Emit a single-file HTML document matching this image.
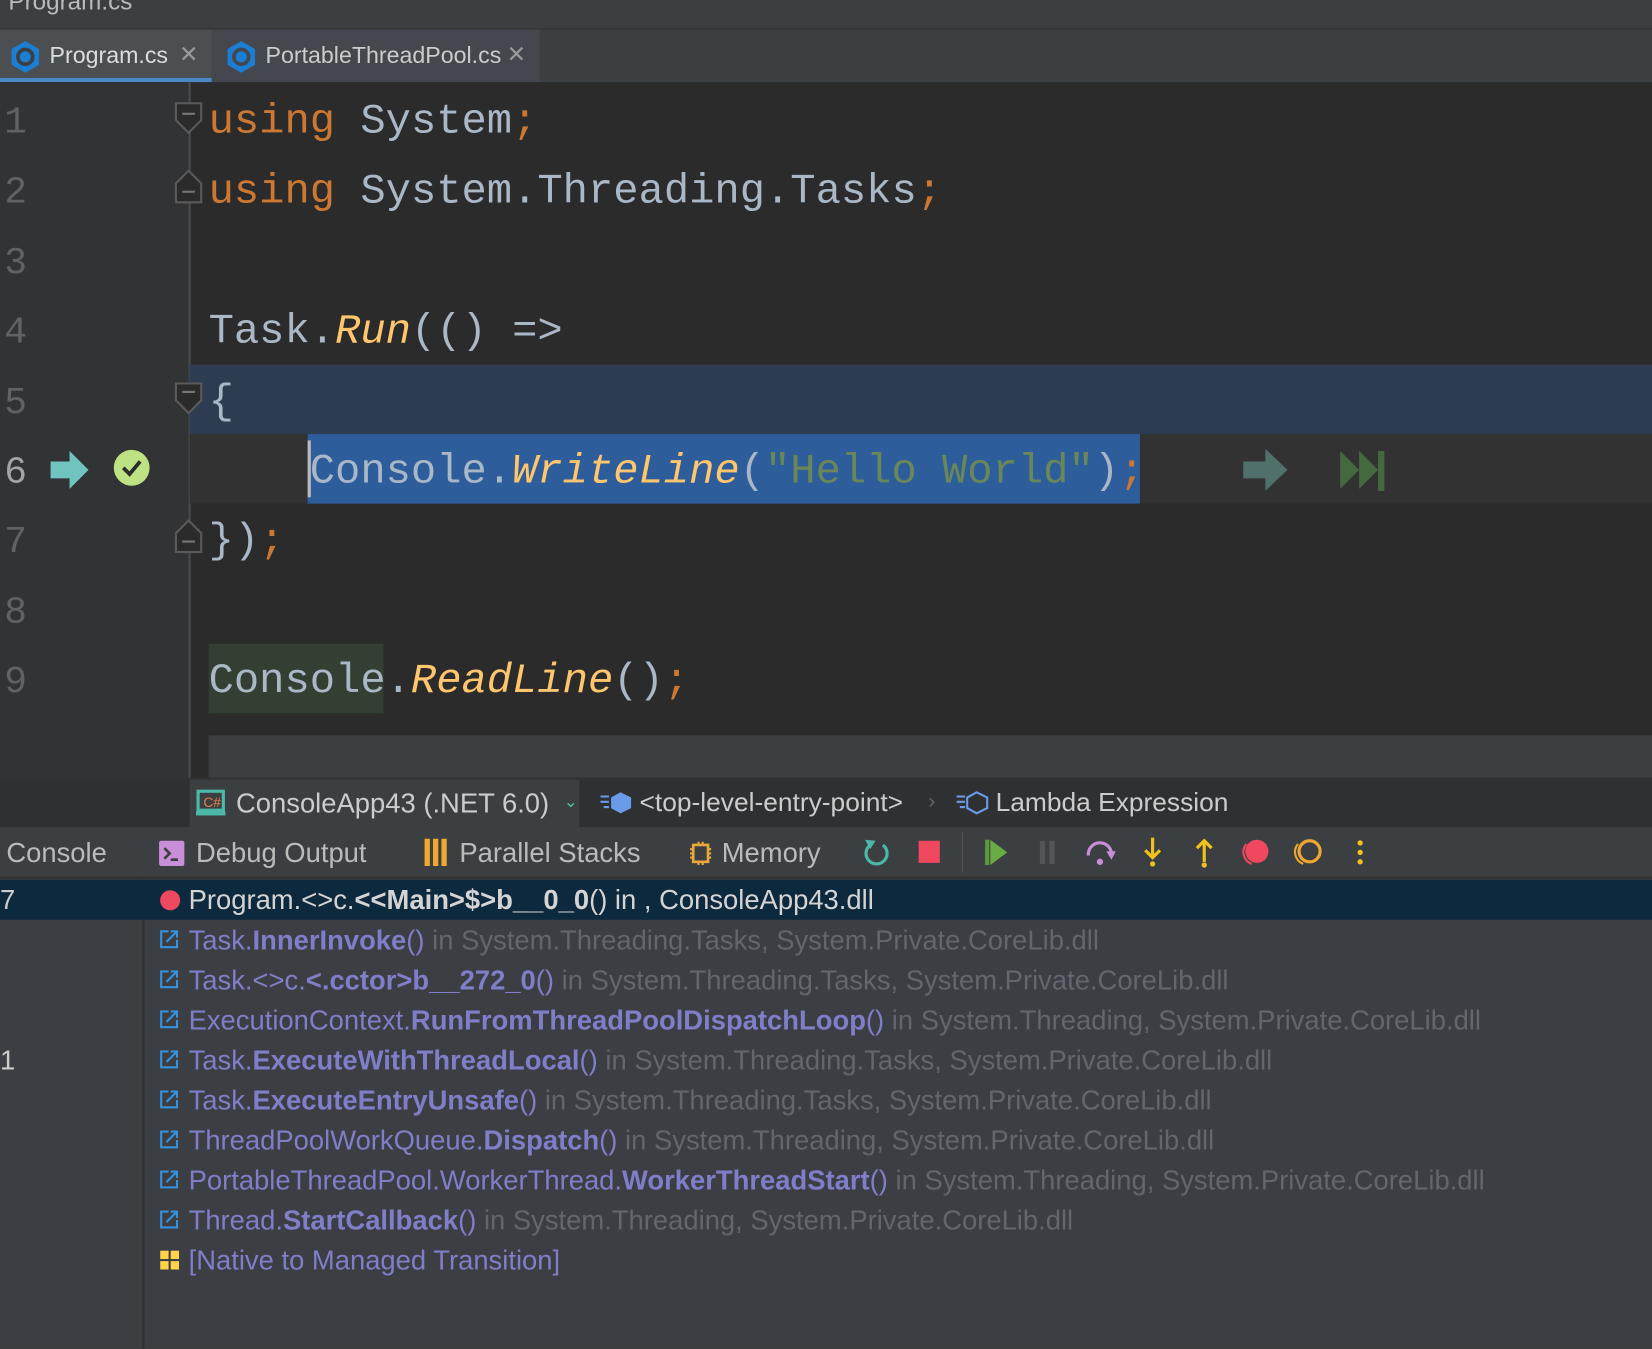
<!DOCTYPE html>
<html><head><meta charset="utf-8"><style>
*{margin:0;padding:0;box-sizing:border-box}
html,body{width:1652px;height:1348px;overflow:hidden;background:#3c3f41}
#w{position:absolute;left:0;top:0;width:1568px;height:1280px;transform:scale(1.05357);transform-origin:0 0;font-family:"Liberation Sans",sans-serif}
.a{position:absolute;white-space:pre}
.code{font-family:"Liberation Mono",monospace;font-size:40px;color:#a9b7c6;line-height:66px}
.kw{color:#cc7832}.fn{color:#ffc66d;font-style:italic}.str{color:#6a8759}
.ln{font-family:"Liberation Mono",monospace;font-size:36px;color:#606366;line-height:66px;left:4px}
.ui{font-size:26px;color:#bbbbbb;line-height:38px}
.m{color:#7f7fc9}.m b{font-weight:bold}.g{color:#64656f}
.ic{position:absolute;left:151px}
</style></head><body><div id="w">
<!-- title -->
<div class="a" style="left:0;top:0;width:1568px;height:28px;background:#3c3f41;border-bottom:1px solid #323232"></div>
<div class="a ui" style="left:8px;top:-18px;color:#bbb;font-size:23px">Program.cs</div>
<!-- tabs -->
<div class="a" style="left:0;top:28px;width:1568px;height:50px;background:#3c3f41"></div>
<div class="a" style="left:0;top:28px;width:201px;height:50px;background:#4b4f52;border-bottom:4px solid #4a88c7"></div>
<div class="a" style="left:201px;top:28px;width:311px;height:50px;background:#45474f"></div>
<svg class="a" style="left:9px;top:38px" width="30" height="32"><polygon points="15,1 28,8.5 28,23.5 15,31 2,23.5 2,8.5" fill="#1a7fd4"/><circle cx="15" cy="16" r="7" fill="none" stroke="#3c3f41" stroke-width="3.5"/></svg>
<div class="a ui" style="left:47px;top:34px;color:#ddd;font-size:22px">Program.cs</div>
<div class="a ui" style="left:170px;top:33px;color:#999;font-size:22px">✕</div>
<svg class="a" style="left:214px;top:38px" width="30" height="32"><polygon points="15,1 28,8.5 28,23.5 15,31 2,23.5 2,8.5" fill="#1a7fd4"/><circle cx="15" cy="16" r="7" fill="none" stroke="#45474f" stroke-width="3.5"/></svg>
<div class="a ui" style="left:252px;top:34px;color:#ccc;font-size:22px">PortableThreadPool.cs</div>
<div class="a ui" style="left:481px;top:33px;color:#999;font-size:22px">✕</div>
<!-- editor -->
<div class="a" style="left:0;top:78px;width:1568px;height:660px;background:#2b2b2b"></div>
<div class="a" style="left:0;top:78px;width:180px;height:660px;background:#313335"></div>
<div class="a" style="left:179px;top:78px;width:2px;height:660px;background:#4a4a4a"></div>
<div class="a" style="left:180px;top:346px;width:1388px;height:66px;background:#2e3c52"></div>
<div class="a" style="left:180px;top:412px;width:1388px;height:66px;background:#323232"></div>
<div class="a" style="left:292px;top:412px;width:790px;height:66px;background:#2d5d9b"></div>
<div class="a" style="left:292px;top:418px;width:3px;height:54px;background:#bbb"></div>
<div class="a" style="left:198px;top:611px;width:166px;height:66px;background:#343f33"></div>
<div class="a" style="left:198px;top:698px;width:1370px;height:40px;background:#3c3f41"></div>
<div class="a ln" style="top:84px">1</div>
<div class="a ln" style="top:150px">2</div>
<div class="a ln" style="top:217px">3</div>
<div class="a ln" style="top:283px">4</div>
<div class="a ln" style="top:350px">5</div>
<div class="a ln" style="top:416px;color:#a4a4a4">6</div>
<div class="a ln" style="top:482px">7</div>
<div class="a ln" style="top:549px">8</div>
<div class="a ln" style="top:615px">9</div>
<!-- fold markers -->
<svg class="a" style="left:164px;top:88px" width="32" height="450">
<g fill="#2b2b2b" stroke="#5a5a5a" stroke-width="2">
<path d="M3,10 H27 V26 L15,38 L3,26 Z"/><path d="M3,86 L15,74 L27,86 V104 H3 Z"/>
<path d="M3,276 H27 V292 L15,304 L3,292 Z"/><path d="M3,418 L15,406 L27,418 V436 H3 Z"/></g>
<g stroke="#777" stroke-width="2"><path d="M9,20 H21 M9,94 H21 M9,284 H21 M9,426 H21"/></g></svg>
<div class="a code" style="left:198px;top:84px"><span class="kw">using</span> System<span class="kw">;</span></div>
<div class="a code" style="left:198px;top:150px"><span class="kw">using</span> System.Threading.Tasks<span class="kw">;</span></div>
<div class="a code" style="left:198px;top:283px">Task.<span class="fn">Run</span>(() =&gt;</div>
<div class="a code" style="left:198px;top:350px">{</div>
<div class="a code" style="left:294px;top:416px">Console.<span class="fn">WriteLine</span>(<span class="str">"Hello World"</span>)<span class="kw">;</span></div>
<div class="a code" style="left:198px;top:482px">})<span class="kw">;</span></div>
<div class="a code" style="left:198px;top:615px">Console.<span class="fn">ReadLine</span>()<span class="kw">;</span></div>
<!-- gutter icons line 6 -->
<svg class="a" style="left:46px;top:426px" width="42" height="40"><polygon points="2,12 20,12 20,2 38,20 20,38 20,28 2,28" fill="#6fc4c0"/></svg>
<svg class="a" style="left:107px;top:426px" width="38" height="38"><circle cx="18" cy="18" r="17" fill="#bde283"/><path d="M10,18 L16,24 L26,12" fill="none" stroke="#2b2b2b" stroke-width="3.5"/></svg>
<svg class="a" style="left:1178px;top:424px" width="48" height="44"><polygon points="2,14 23,14 23,2 44,22 23,42 23,30 2,30" fill="#4f706b"/></svg>
<svg class="a" style="left:1270px;top:424px" width="50" height="42"><polygon points="2,4 20,22 2,40" fill="#45693f"/><polygon points="20,4 38,22 20,40" fill="#45693f"/><rect x="38" y="4" width="6" height="38" fill="#45693f"/></svg>
<!-- breadcrumb -->
<div class="a" style="left:0;top:738px;width:1568px;height:47px;background:#2f3031;border-top:2px solid #323232"></div>
<div class="a" style="left:180px;top:740px;width:370px;height:45px;background:#3c3f41"></div>
<svg class="a" style="left:186px;top:749px" width="30" height="26"><rect x="2" y="2" width="24" height="18" fill="none" stroke="#4cb8a8" stroke-width="3"/><rect x="0" y="21" width="28" height="4" fill="#4cb8a8"/><text x="7" y="17" font-size="13" fill="#e8804a" font-family="Liberation Sans">C#</text></svg>
<div class="a ui" style="left:224px;top:743px;color:#ccc">ConsoleApp43 (.NET 6.0)</div>
<div class="a ui" style="left:535px;top:743px;color:#4cb8a8;font-size:16px">⌄</div>
<svg class="a" style="left:568px;top:750px" width="34" height="24"><path d="M2,6 H10 M2,11 H10 M5,16 H10" stroke="#6a9be8" stroke-width="2"/><polygon points="21,2 31,7 31,17 21,22 12,17 12,7" fill="#6a9be8"/></svg>
<div class="a ui" style="left:607px;top:743px;color:#ccc;font-size:25px">&lt;top-level-entry-point&gt;</div>
<div class="a ui" style="left:881px;top:742px;color:#666;font-size:20px">›</div>
<svg class="a" style="left:906px;top:750px" width="34" height="24"><path d="M2,6 H10 M2,11 H10 M5,16 H10" stroke="#6a9be8" stroke-width="2"/><polygon points="21,2 31,7 31,17 21,22 12,17 12,7" fill="none" stroke="#6a9be8" stroke-width="2"/></svg>
<div class="a ui" style="left:945px;top:743px;color:#ccc;font-size:25px">Lambda Expression</div>
<!-- toolbar -->
<div class="a" style="left:0;top:785px;width:1568px;height:49px;background:#3c3f41;border-bottom:2px solid #323232"></div>
<div class="a ui" style="left:6px;top:790px">Console</div>
<svg class="a" style="left:150px;top:797px" width="26" height="26"><rect x="1" y="1" width="24" height="24" rx="2" fill="#c98ed8"/><path d="M6,8 L11,13 L6,18 M12,19 H19" stroke="#3c3f41" stroke-width="2.5" fill="none"/></svg>
<div class="a ui" style="left:186px;top:790px">Debug Output</div>
<svg class="a" style="left:402px;top:796px" width="24" height="26"><rect x="1" y="0" width="5" height="26" fill="#f0a732"/><rect x="9" y="0" width="5" height="26" fill="#f0a732"/><rect x="17" y="0" width="5" height="26" fill="#f0a732"/></svg>
<div class="a ui" style="left:436px;top:790px">Parallel Stacks</div>
<svg class="a" style="left:654px;top:798px" width="22" height="24"><rect x="4" y="4" width="14" height="16" fill="none" stroke="#e8a83a" stroke-width="2.5"/><path d="M1,8H4M1,12H4M1,16H4M18,8H21M18,12H21M18,16H21M9,1V4M13,1V4M9,20V23M13,20V23" stroke="#e8a83a" stroke-width="2"/></svg>
<div class="a ui" style="left:685px;top:790px">Memory</div>
<svg class="a" style="left:818px;top:794px" width="28" height="30"><path d="M20,8 A10,10 0 1 1 8,8" fill="none" stroke="#4cb8a8" stroke-width="3"/><polygon points="3,3 13,4 8,12" fill="#4cb8a8"/></svg>
<div class="a" style="left:872px;top:798px;width:20px;height:21px;background:#f0495f"></div>
<div class="a" style="left:913px;top:790px;width:1px;height:38px;background:#555"></div>
<svg class="a" style="left:934px;top:796px" width="24" height="26"><rect x="1" y="1" width="4" height="24" fill="#5a9a3c"/><polygon points="6,1 22,13 6,25" fill="#6aac44"/></svg>
<div class="a" style="left:987px;top:798px;width:5px;height:22px;background:#555"></div>
<div class="a" style="left:996px;top:798px;width:5px;height:22px;background:#555"></div>
<svg class="a" style="left:1030px;top:796px" width="30" height="28"><path d="M3,16 A11,11 0 0 1 25,14" fill="none" stroke="#c98ed8" stroke-width="3"/><polygon points="20,12 29,12 25,20" fill="#c98ed8"/><circle cx="14" cy="22" r="3" fill="#c98ed8"/></svg>
<svg class="a" style="left:1083px;top:794px" width="22" height="30"><path d="M11,1 V20 M4,13 L11,20 L18,13" fill="none" stroke="#f2c21c" stroke-width="3"/><circle cx="11" cy="26" r="2.5" fill="#f2c21c"/></svg>
<svg class="a" style="left:1132px;top:794px" width="22" height="30"><path d="M11,24 V4 M4,11 L11,4 L18,11" fill="none" stroke="#f2c21c" stroke-width="3"/><circle cx="11" cy="27" r="2.5" fill="#f2c21c"/></svg>
<svg class="a" style="left:1178px;top:795px" width="28" height="28"><circle cx="15" cy="13" r="11" fill="#f0495f"/><path d="M5,6 A12,12 0 0 0 10,25" fill="none" stroke="#f0495f" stroke-width="2"/></svg>
<svg class="a" style="left:1227px;top:795px" width="28" height="28"><circle cx="16" cy="13" r="10" fill="none" stroke="#f0a732" stroke-width="3"/><path d="M5,6 A12,12 0 0 0 10,25" fill="none" stroke="#f0a732" stroke-width="2"/></svg>
<svg class="a" style="left:1286px;top:796px" width="10" height="26"><circle cx="5" cy="4" r="2.5" fill="#f2c21c"/><circle cx="5" cy="13" r="2.5" fill="#f2c21c"/><circle cx="5" cy="22" r="2.5" fill="#f2c21c"/></svg>
<!-- frames -->
<div class="a" style="left:0;top:835px;width:1568px;height:445px;background:#3b3e42"></div>
<div class="a" style="left:135px;top:835px;width:2px;height:445px;background:#2f3133"></div>
<div class="a" style="left:0;top:835px;width:1568px;height:38px;background:#0d293e"></div>
<div class="a ui" style="left:0;top:835px;color:#ccc">7</div>
<div class="a ui" style="left:0;top:987px;color:#ccc">1</div>
<div class="a" style="left:152px;top:845px;width:19px;height:19px;border-radius:50%;background:#f0495f"></div>
<div class="a ui" style="left:179px;top:835px;color:#d4d4d4">Program.&lt;&gt;c.<b>&lt;&lt;Main&gt;$&gt;b__0_0</b>() in , ConsoleApp43.dll</div>
<svg width="0" height="0" style="position:absolute"><defs><g id="ex"><path d="M9,2 H2 V17 H17 V10" fill="none" stroke="#3592e0" stroke-width="2"/><path d="M7,12 L17,2 M11,2 H17 V8" fill="none" stroke="#3592e0" stroke-width="2"/></g></defs></svg>
<svg class="ic" style="top:882px" width="20" height="20"><use href="#ex"/></svg><div class="a ui m" style="left:179px;top:873px">Task.<b>InnerInvoke</b>() <span class="g">in System.Threading.Tasks, System.Private.CoreLib.dll</span></div>
<svg class="ic" style="top:920px" width="20" height="20"><use href="#ex"/></svg><div class="a ui m" style="left:179px;top:911px">Task.&lt;&gt;c.<b>&lt;.cctor&gt;b__272_0</b>() <span class="g">in System.Threading.Tasks, System.Private.CoreLib.dll</span></div>
<svg class="ic" style="top:958px" width="20" height="20"><use href="#ex"/></svg><div class="a ui m" style="left:179px;top:949px">ExecutionContext.<b>RunFromThreadPoolDispatchLoop</b>() <span class="g">in System.Threading, System.Private.CoreLib.dll</span></div>
<svg class="ic" style="top:996px" width="20" height="20"><use href="#ex"/></svg><div class="a ui m" style="left:179px;top:987px">Task.<b>ExecuteWithThreadLocal</b>() <span class="g">in System.Threading.Tasks, System.Private.CoreLib.dll</span></div>
<svg class="ic" style="top:1034px" width="20" height="20"><use href="#ex"/></svg><div class="a ui m" style="left:179px;top:1025px">Task.<b>ExecuteEntryUnsafe</b>() <span class="g">in System.Threading.Tasks, System.Private.CoreLib.dll</span></div>
<svg class="ic" style="top:1072px" width="20" height="20"><use href="#ex"/></svg><div class="a ui m" style="left:179px;top:1063px">ThreadPoolWorkQueue.<b>Dispatch</b>() <span class="g">in System.Threading, System.Private.CoreLib.dll</span></div>
<svg class="ic" style="top:1110px" width="20" height="20"><use href="#ex"/></svg><div class="a ui m" style="left:179px;top:1101px">PortableThreadPool.WorkerThread.<b>WorkerThreadStart</b>() <span class="g">in System.Threading, System.Private.CoreLib.dll</span></div>
<svg class="ic" style="top:1148px" width="20" height="20"><use href="#ex"/></svg><div class="a ui m" style="left:179px;top:1139px">Thread.<b>StartCallback</b>() <span class="g">in System.Threading, System.Private.CoreLib.dll</span></div>
<svg class="a" style="left:152px;top:1187px" width="18" height="18"><rect x="0" y="0" width="8" height="8" fill="#ffd24a"/><rect x="10" y="0" width="8" height="8" fill="#ffd24a"/><rect x="0" y="10" width="8" height="8" fill="#ffd24a"/><rect x="10" y="10" width="8" height="8" fill="#ffd24a"/></svg>
<div class="a ui m" style="left:179px;top:1177px">[Native to Managed Transition]</div>
</div></body></html>
